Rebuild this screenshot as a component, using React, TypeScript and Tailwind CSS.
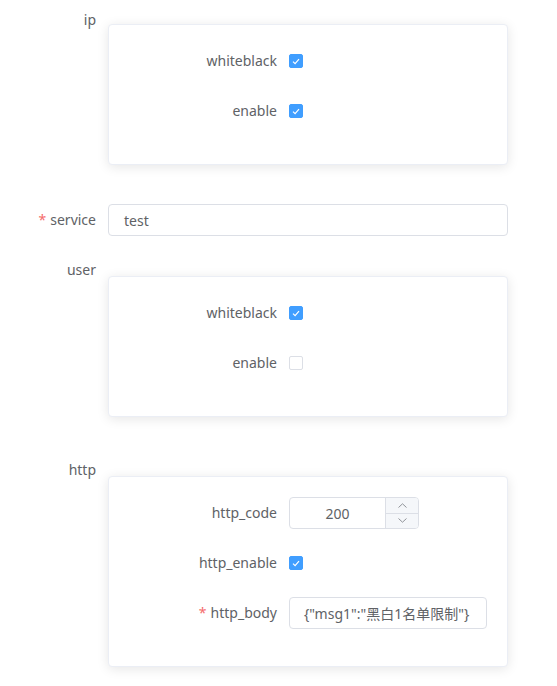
const font = { fontFamily: '"Noto Sans", "Noto Sans CJK SC", sans-serif' };

function Check({ checked }: { checked: boolean }) {
  return checked ? (
    <span className="flex h-[14px] w-[14px] items-center justify-center rounded-[2px] border border-[#409eff] bg-[#409eff]">
      <svg width="8" height="7" viewBox="0 0 8 7" fill="none">
        <path d="M1 3.6 L3.1 5.6 L7 1.2" stroke="#fff" strokeWidth="1.2" />
      </svg>
    </span>
  ) : (
    <span className="block h-[14px] w-[14px] rounded-[2px] border border-[#dcdfe6] bg-white" />
  );
}

function Label({ text, required, width }: { text: string; required?: boolean; width: string }) {
  return (
    <label className={`${width} block shrink-0 pr-3 text-right text-[14px] leading-[40px] text-[#606266]`}>
      {required && <span className="mr-1 text-[#f56c6c]">*</span>}
      {text}
    </label>
  );
}

function InnerRow({ label, required, children }: { label: string; required?: boolean; children: React.ReactNode }) {
  return (
    <div className="flex h-[40px] items-center">
      <Label text={label} required={required} width="w-[180px]" />
      {children}
    </div>
  );
}

function Card({ children }: { children: React.ReactNode }) {
  return (
    <div className="flex flex-col gap-[10px] rounded-[4px] border border-[#ebeef5] bg-white pt-[16px] pb-[33px] shadow-[0_2px_12px_0_rgba(0,0,0,0.1)]">
      {children}
    </div>
  );
}

function Section({ label, offset, children }: { label: string; offset: string; children: React.ReactNode }) {
  return (
    <div className="flex">
      <div className="h-[40px] w-[108px] shrink-0">
        <Label text={label} width="w-[108px]" />
      </div>
      <div className={`min-w-0 flex-1 ${offset}`}>{children}</div>
    </div>
  );
}

function NumberInput({ value }: { value: number }) {
  return (
    <div className="flex h-[32px] w-[130px] overflow-hidden rounded-[4px] border border-[#dcdfe6] bg-white">
      <div className="flex flex-1 items-center justify-center text-[14px] text-[#606266]">{value}</div>
      <div className="flex w-[33px] flex-col border-l border-[#dcdfe6] bg-[#f5f7fa]">
        <div className="flex flex-1 items-center justify-center border-b border-[#dcdfe6]">
          <svg width="9" height="5" viewBox="0 0 9 5" fill="none">
            <path d="M0.5 4.5 L4.5 0.8 L8.5 4.5" stroke="#909399" strokeWidth="1" />
          </svg>
        </div>
        <div className="flex flex-1 items-center justify-center">
          <svg width="9" height="5" viewBox="0 0 9 5" fill="none">
            <path d="M0.5 0.5 L4.5 4.2 L8.5 0.5" stroke="#909399" strokeWidth="1" />
          </svg>
        </div>
      </div>
    </div>
  );
}

export default function App() {
  return (
    <div className="min-h-[686px] w-[557px] bg-white" style={font}>
      <div className="flex w-[508px] flex-col">
        <Section label="ip" offset="pt-[24px]">
          <Card>
            <InnerRow label="whiteblack">
              <Check checked />
            </InnerRow>
            <InnerRow label="enable">
              <Check checked />
            </InnerRow>
          </Card>
        </Section>

        <div className="mt-[35px] flex h-[40px] items-center">
          <Label text="service" required width="w-[108px]" />
          <div className="flex h-[32px] flex-1 items-center rounded-[4px] border border-[#dcdfe6] px-[15px] text-[14px] text-[#606266]">
            test
          </div>
        </div>

        <div className="mt-[10px]">
          <Section label="user" offset="pt-[26px]">
            <Card>
              <InnerRow label="whiteblack">
                <Check checked />
              </InnerRow>
              <InnerRow label="enable">
                <Check checked={false} />
              </InnerRow>
            </Card>
          </Section>
        </div>

        <div className="mt-[33px]">
          <Section label="http" offset="pt-[26px]">
            <Card>
              <InnerRow label="http_code">
                <NumberInput value={200} />
              </InnerRow>
              <InnerRow label="http_enable">
                <Check checked />
              </InnerRow>
              <InnerRow label="http_body" required>
                <div className="flex h-[32px] w-[198px] items-center rounded-[4px] border border-[#dcdfe6] px-[14px] text-[14px] whitespace-nowrap text-[#606266]">
                  {'{"msg1":"黑白1名单限制"}'}
                </div>
              </InnerRow>
            </Card>
          </Section>
        </div>
      </div>
    </div>
  );
}
